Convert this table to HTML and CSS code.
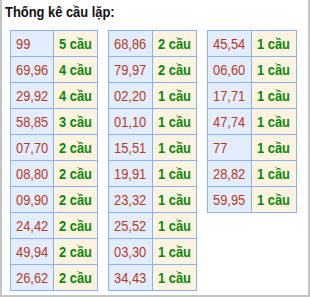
FILE: index.html
```html
<!DOCTYPE html>
<html>
<head>
<meta charset="utf-8">
<link rel="stylesheet" href="styles.css">
</head>
<body>
<div class="box">
  <div class="title"><span>Thống kê cầu lặp:</span></div>
  <div class="tables">
    <div class="grid g1">
      <div class="n"><span>99</span></div><div class="c"><span>5 cầu</span></div>
      <div class="n"><span>69,96</span></div><div class="c"><span>4 cầu</span></div>
      <div class="n"><span>29,92</span></div><div class="c"><span>4 cầu</span></div>
      <div class="n"><span>58,85</span></div><div class="c"><span>3 cầu</span></div>
      <div class="n"><span>07,70</span></div><div class="c"><span>2 cầu</span></div>
      <div class="n"><span>08,80</span></div><div class="c"><span>2 cầu</span></div>
      <div class="n"><span>09,90</span></div><div class="c"><span>2 cầu</span></div>
      <div class="n"><span>24,42</span></div><div class="c"><span>2 cầu</span></div>
      <div class="n"><span>49,94</span></div><div class="c"><span>2 cầu</span></div>
      <div class="n"><span>26,62</span></div><div class="c"><span>2 cầu</span></div>
    </div>
    <div class="grid g2">
      <div class="n"><span>68,86</span></div><div class="c"><span>2 cầu</span></div>
      <div class="n"><span>79,97</span></div><div class="c"><span>2 cầu</span></div>
      <div class="n"><span>02,20</span></div><div class="c"><span>1 cầu</span></div>
      <div class="n"><span>01,10</span></div><div class="c"><span>1 cầu</span></div>
      <div class="n"><span>15,51</span></div><div class="c"><span>1 cầu</span></div>
      <div class="n"><span>19,91</span></div><div class="c"><span>1 cầu</span></div>
      <div class="n"><span>23,32</span></div><div class="c"><span>1 cầu</span></div>
      <div class="n"><span>25,52</span></div><div class="c"><span>1 cầu</span></div>
      <div class="n"><span>03,30</span></div><div class="c"><span>1 cầu</span></div>
      <div class="n"><span>34,43</span></div><div class="c"><span>1 cầu</span></div>
    </div>
    <div class="grid g3">
      <div class="n"><span>45,54</span></div><div class="c"><span>1 cầu</span></div>
      <div class="n"><span>06,60</span></div><div class="c"><span>1 cầu</span></div>
      <div class="n"><span>17,71</span></div><div class="c"><span>1 cầu</span></div>
      <div class="n"><span>47,74</span></div><div class="c"><span>1 cầu</span></div>
      <div class="n"><span>77</span></div><div class="c"><span>1 cầu</span></div>
      <div class="n"><span>28,82</span></div><div class="c"><span>1 cầu</span></div>
      <div class="n"><span>59,95</span></div><div class="c"><span>1 cầu</span></div>
    </div>
  </div>
</div>
</body>
</html>
```

FILE: styles.css
```css
html, body {
  margin: 0;
  padding: 0;
  background: #fff;
}
.box {
  width: 310px;
  height: 297px;
  box-sizing: border-box;
  border: 2px solid #c4c4c4;
  border-top: none;
  font-family: "Liberation Sans", Arial, sans-serif;
}
.title {
  font-size: 15px;
  font-weight: bold;
  color: #111;
  line-height: 20px;
  padding: 2px 0 0 3px;
  height: 30px;
  box-sizing: border-box;
  white-space: nowrap;
}
.title span,
.n span,
.c span {
  display: inline-block;
  transform: scaleX(0.86);
  transform-origin: left center;
}
.tables {
  display: flex;
  align-items: flex-start;
  gap: 10px;
  padding-left: 8px;
}
.grid {
  display: grid;
  grid-auto-rows: 25px;
  gap: 1px;
  padding: 1px;
  background: #8cb1f2;
}
.g1 { grid-template-columns: 42px 43px; }
.g2 { grid-template-columns: 43px 43px; }
.g3 { grid-template-columns: 43px 44px; }
.n, .c {
  font-size: 15px;
  line-height: 25px;
  padding-left: 5px;
  white-space: nowrap;
  overflow: hidden;
}
.n {
  background: #e2edfd;
  color: #b83a1e;
}
.c {
  background: #fdf3e1;
  color: #0b870b;
  font-weight: bold;
}
```
